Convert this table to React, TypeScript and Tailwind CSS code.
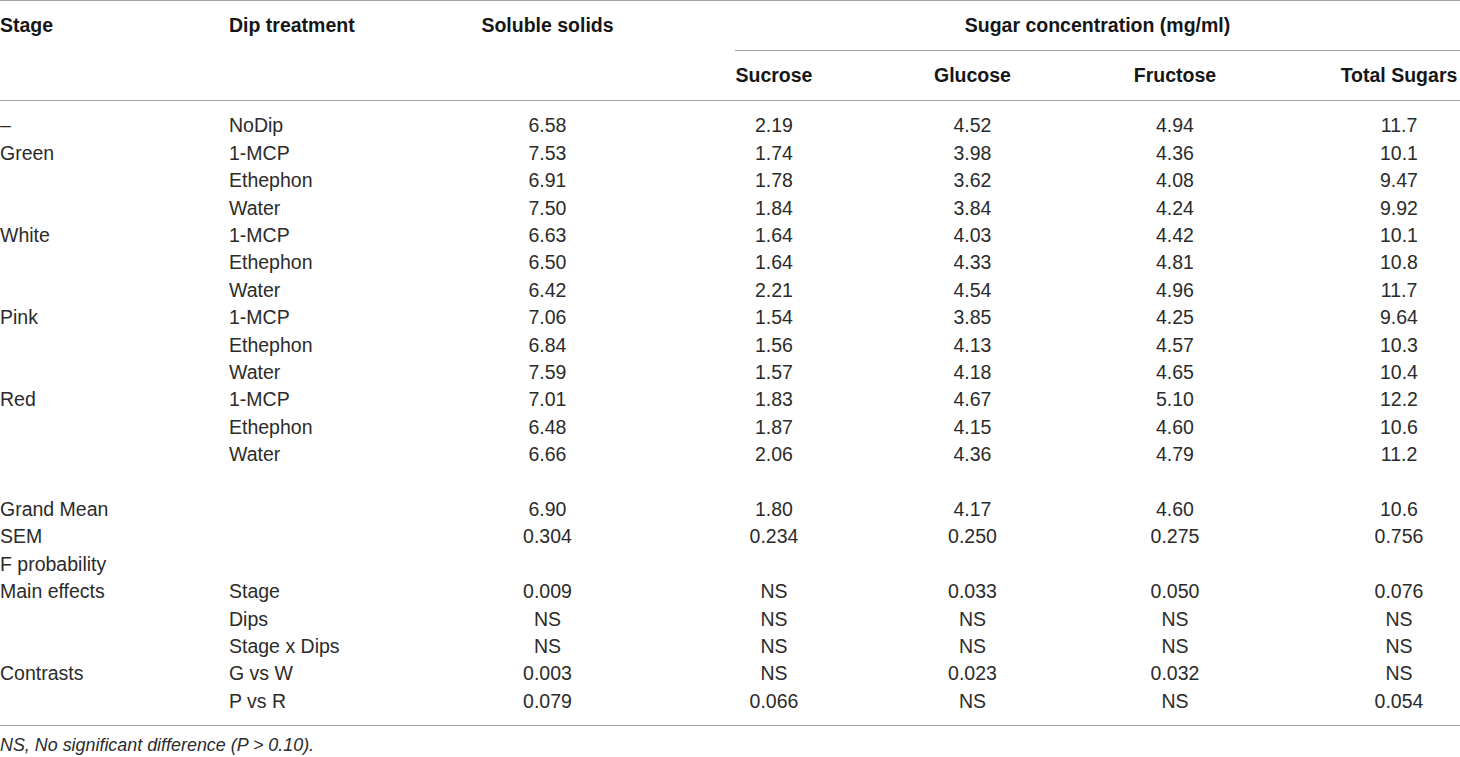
import React from "react";

type Row = string[];

// column centres: 547.5, 774, 972.5, 1175, 1399
const numCols = [
  "ml-[27.5px]",
  "ml-[106.5px]",
  "ml-[78.5px]",
  "ml-[82.5px]",
  "ml-[104px]",
];

const rows: (Row | null)[] = [
  ["–", "NoDip", "6.58", "2.19", "4.52", "4.94", "11.7"],
  ["Green", "1-MCP", "7.53", "1.74", "3.98", "4.36", "10.1"],
  ["", "Ethephon", "6.91", "1.78", "3.62", "4.08", "9.47"],
  ["", "Water", "7.50", "1.84", "3.84", "4.24", "9.92"],
  ["White", "1-MCP", "6.63", "1.64", "4.03", "4.42", "10.1"],
  ["", "Ethephon", "6.50", "1.64", "4.33", "4.81", "10.8"],
  ["", "Water", "6.42", "2.21", "4.54", "4.96", "11.7"],
  ["Pink", "1-MCP", "7.06", "1.54", "3.85", "4.25", "9.64"],
  ["", "Ethephon", "6.84", "1.56", "4.13", "4.57", "10.3"],
  ["", "Water", "7.59", "1.57", "4.18", "4.65", "10.4"],
  ["Red", "1-MCP", "7.01", "1.83", "4.67", "5.10", "12.2"],
  ["", "Ethephon", "6.48", "1.87", "4.15", "4.60", "10.6"],
  ["", "Water", "6.66", "2.06", "4.36", "4.79", "11.2"],
  null,
  ["Grand Mean", "", "6.90", "1.80", "4.17", "4.60", "10.6"],
  ["SEM", "", "0.304", "0.234", "0.250", "0.275", "0.756"],
  ["F probability", "", "", "", "", "", ""],
  ["Main effects", "Stage", "0.009", "NS", "0.033", "0.050", "0.076"],
  ["", "Dips", "NS", "NS", "NS", "NS", "NS"],
  ["", "Stage x Dips", "NS", "NS", "NS", "NS", "NS"],
  ["Contrasts", "G vs W", "0.003", "NS", "0.023", "0.032", "NS"],
  ["", "P vs R", "0.079", "0.066", "NS", "NS", "0.054"],
];

const TableRow = ({ row }: { row: Row | null }) => {
  if (!row) return <div className="h-[27.42px]" />;
  const [stage, dip, ...values] = row;
  return (
    <div className="flex h-[27.42px] items-center whitespace-nowrap">
      <div className="w-[229px] shrink-0">{stage}</div>
      <div className="w-[231px] shrink-0">{dip}</div>
      {values.map((v, i) => (
        <div key={i} className={`${numCols[i]} w-[120px] shrink-0 text-center`}>
          {v}
        </div>
      ))}
    </div>
  );
};

export default function App() {
  return (
    <div className="w-[1460px] bg-white font-['Liberation_Sans',Arial,sans-serif] text-[19.5px] leading-[27.42px] text-[#2b2b2b]">
      <div className="border-t border-[#a3a3a3]" />

      {/* Header, first level */}
      <div className="flex h-[49px] pt-[11px] font-bold text-[#161616] whitespace-nowrap">
        <div className="w-[229px] shrink-0">Stage</div>
        <div className="w-[231px] shrink-0">Dip treatment</div>
        <div className="ml-[12.5px] w-[150px] shrink-0 text-center">Soluble solids</div>
        <div className="ml-[112.5px] flex-1 text-center">Sugar concentration (mg/ml)</div>
      </div>
      <div className="ml-[735px] border-t border-[#a3a3a3]" />

      {/* Header, second level */}
      <div className="flex h-[49px] pt-[11px] font-bold text-[#161616] whitespace-nowrap">
        <div className="w-[229px] shrink-0" />
        <div className="w-[231px] shrink-0" />
        <div className={`${numCols[0]} w-[120px] shrink-0`} />
        <div className={`${numCols[1]} w-[120px] shrink-0 text-center`}>Sucrose</div>
        <div className={`${numCols[2]} w-[120px] shrink-0 text-center`}>Glucose</div>
        <div className={`${numCols[3]} w-[120px] shrink-0 text-center`}>Fructose</div>
        <div className={`${numCols[4]} w-[120px] shrink-0 text-center`}>Total Sugars</div>
      </div>
      <div className="border-t border-[#a3a3a3]" />

      {/* Body */}
      <div className="pt-[11.3px] pb-[10px]">
        {rows.map((row, i) => (
          <TableRow key={i} row={row} />
        ))}
      </div>
      <div className="border-t border-[#a3a3a3]" />

      <div className="pt-[6px] text-[17.9px] italic">
        NS, No significant difference (P &gt; 0.10).
      </div>
    </div>
  );
}
